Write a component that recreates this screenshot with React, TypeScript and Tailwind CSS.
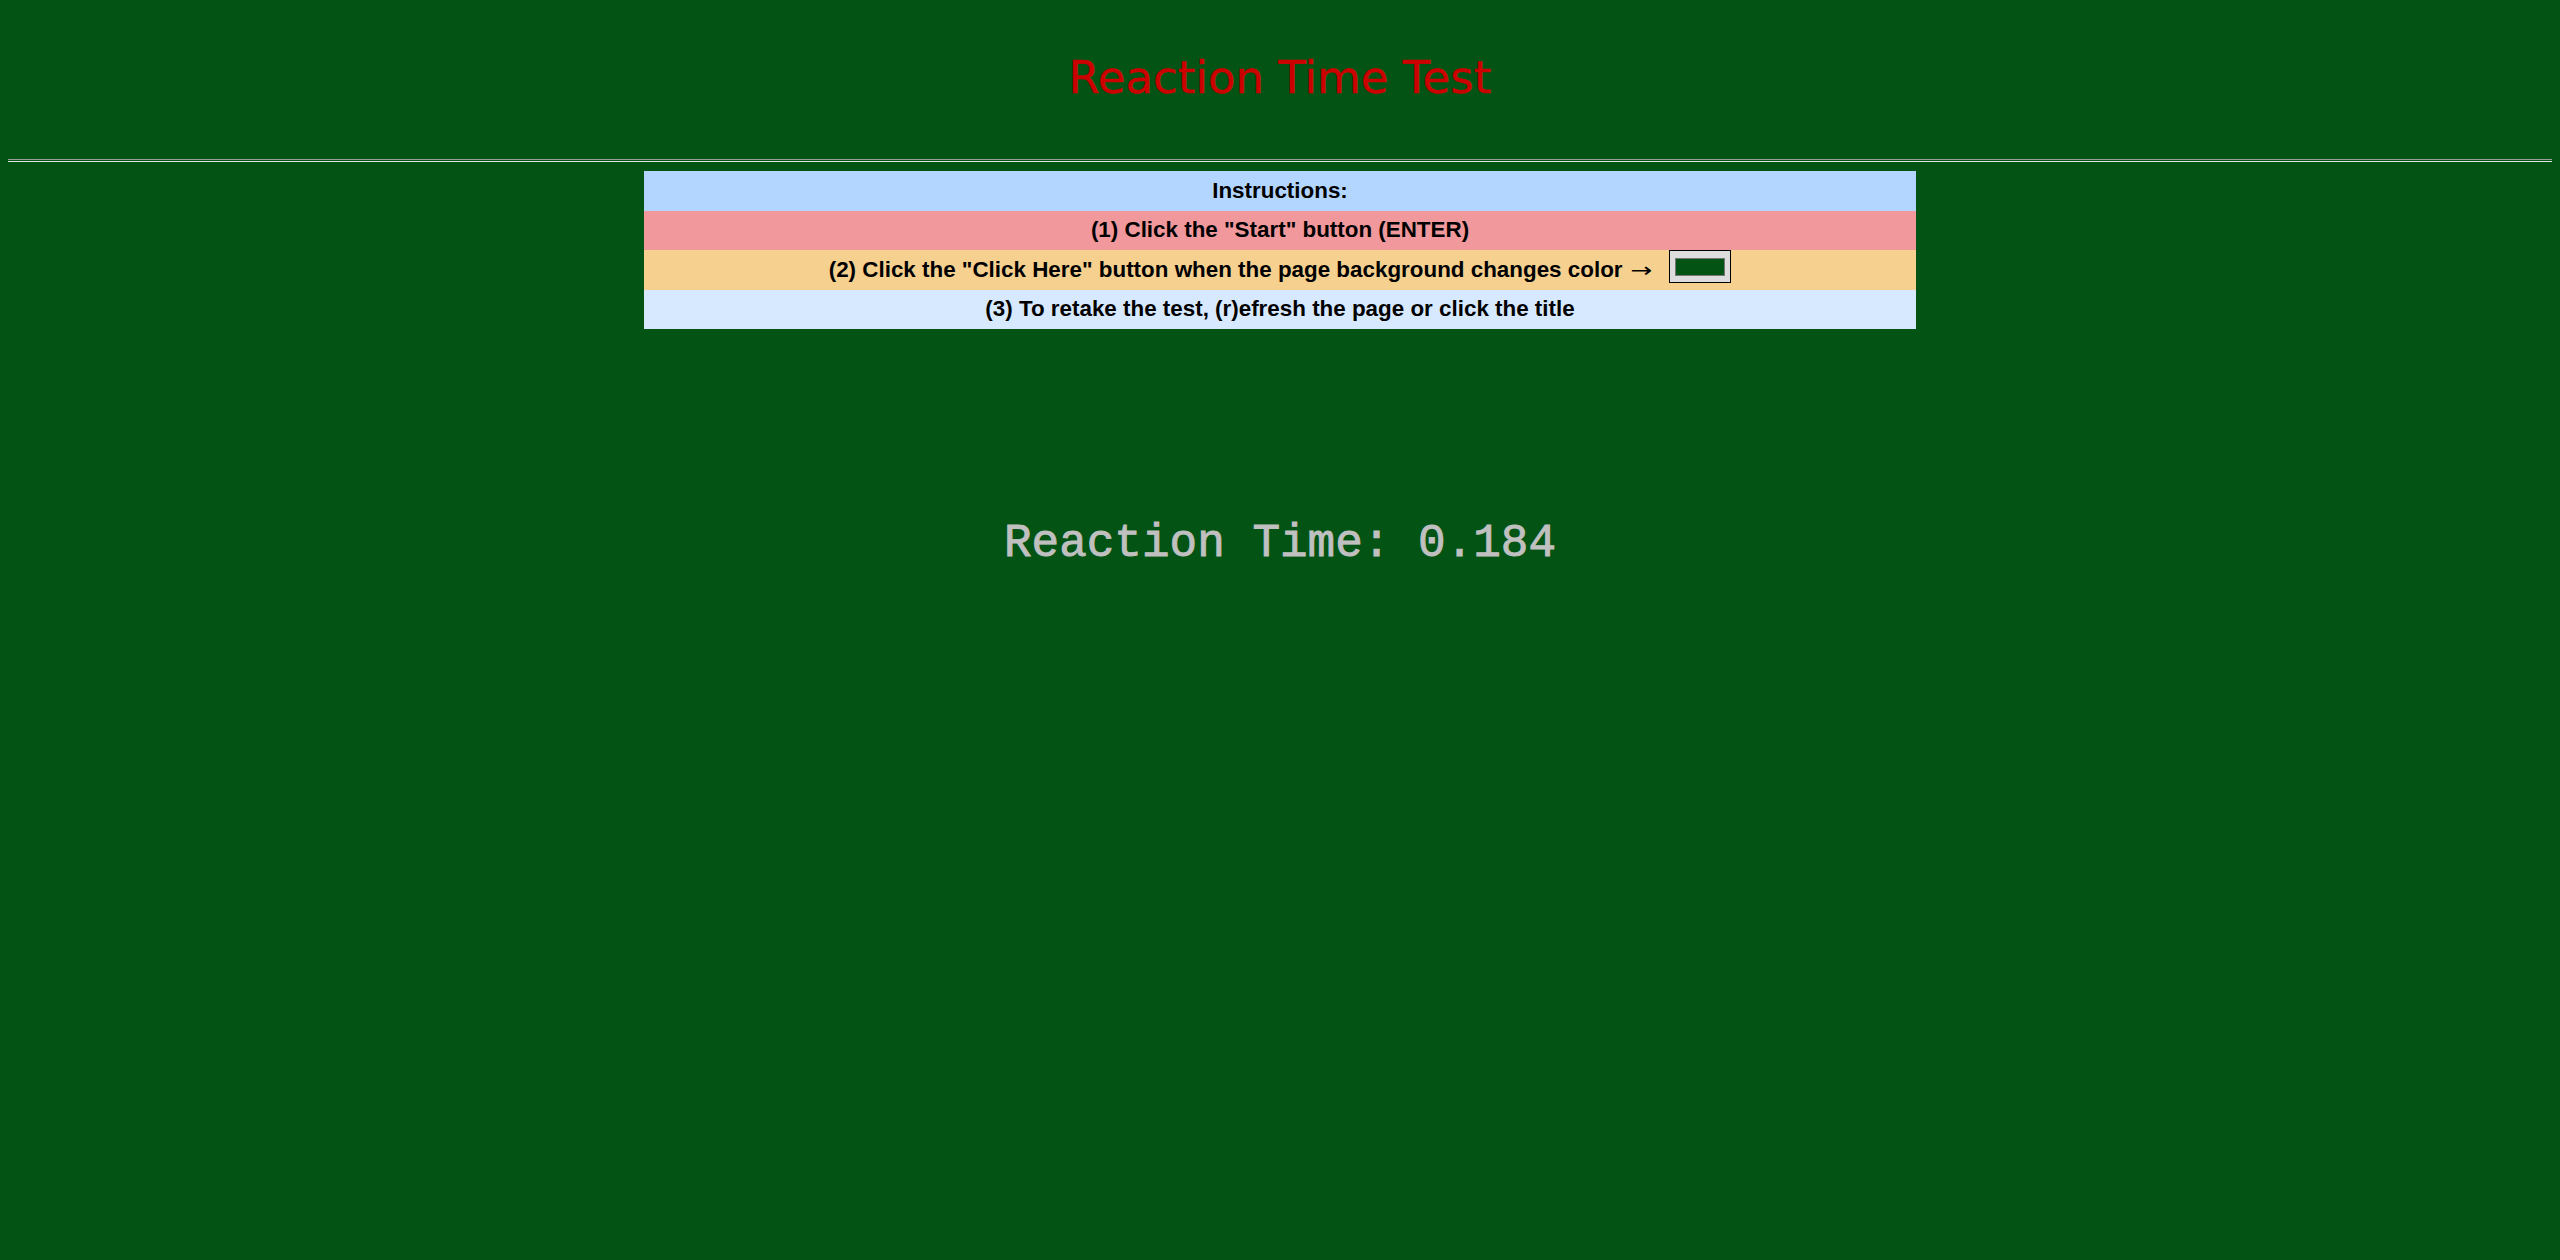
export default function App() {
  return (
    <div className="min-h-[1260px] w-full bg-[#025314] px-[8px]">
      <h1
        className="pt-[52px] text-center text-[45px] leading-[52px] font-normal text-[#cc0000] [-webkit-text-stroke:0.4px_#cc0000]"
        style={{ fontFamily: '"DejaVu Sans", sans-serif' }}
      >
        Reaction Time Test
      </h1>
      <div className="mt-[55px] h-[3px] border-t border-b border-t-[#9c9c9c] border-b-[#e4e4e4]" />

      <div
        className="mx-auto mt-[9px] w-1/2 text-center text-[22.4px] font-bold text-black"
        style={{ fontFamily: '"Liberation Sans", Arial, sans-serif' }}
      >
        <div className="flex h-[39.5px] items-center justify-center bg-[#b2d6ff]">Instructions:</div>
        <div className="flex h-[39.5px] items-center justify-center bg-[#f0989b]">
          (1) Click the "Start" button (ENTER)
        </div>
        <div className="flex h-[39.5px] items-start justify-center bg-[#f5d08f]">
          <span className="self-center">
            (2) Click the "Click Here" button when the page background changes color
            <span className="ml-[10px] mr-[2px] inline-block scale-x-[1.3] font-normal text-[20px] [font-family:'DejaVu_Sans',sans-serif]">→</span>
          </span>
          <span className="ml-[18px] flex h-[33px] w-[62px] items-center justify-center border border-black bg-[#dddddd]">
            <span className="h-[18px] w-[50px] border border-[#777777] bg-[#025314]" />
          </span>
        </div>
        <div className="flex h-[39.5px] items-center justify-center bg-[#d7e9ff]">
          (3) To retake the test, (r)efresh the page or click the title
        </div>
      </div>

      <p
        className="mt-[189px] text-center text-[46px] leading-[52px] text-[#c0c0c0] [-webkit-text-stroke:0.9px_#c0c0c0]"
        style={{ fontFamily: '"Liberation Mono", monospace' }}
      >
        Reaction Time: 0.184
      </p>
    </div>
  );
}
